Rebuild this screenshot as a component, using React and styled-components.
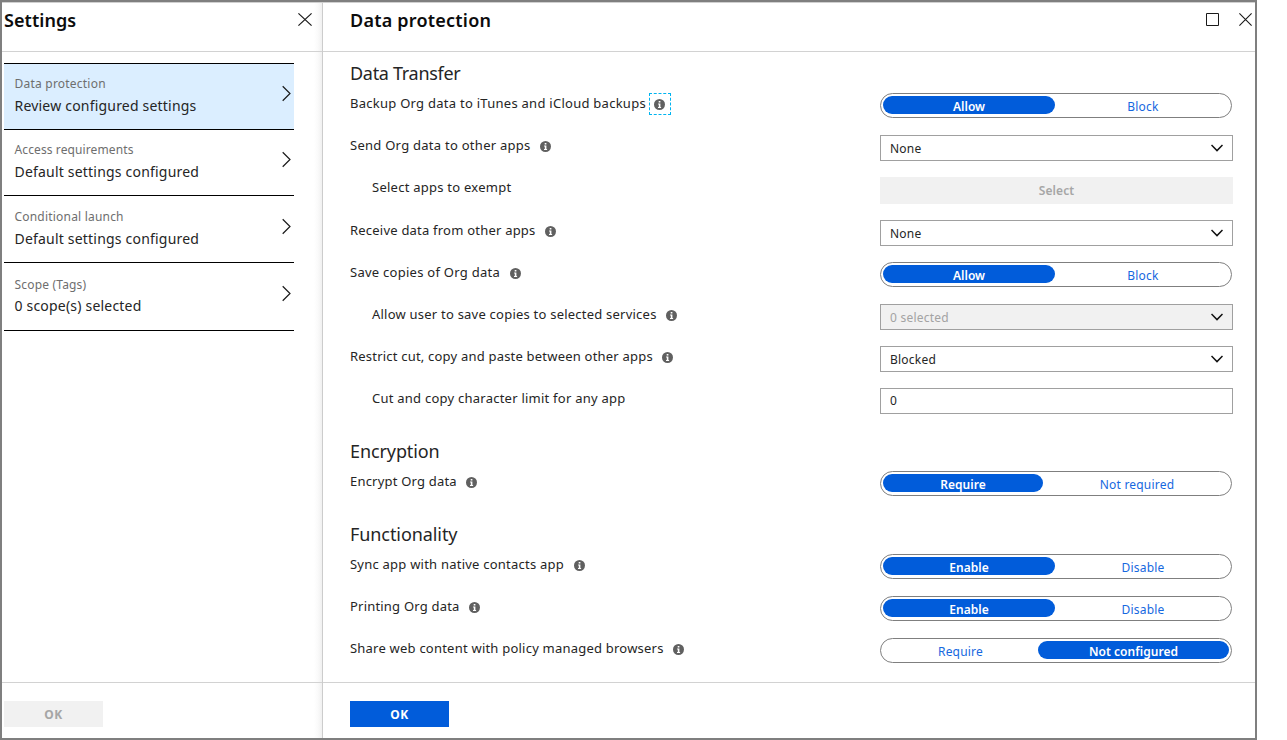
import React from "react";
import styled, { createGlobalStyle, css } from "styled-components";

const GlobalStyle = createGlobalStyle`
  *, *::before, *::after { box-sizing: border-box; }
  body { margin: 0; background: #fff; }
  button, input { font: inherit; letter-spacing: inherit; margin: 0; }
`;

const Frame = styled.div`
  display: flex;
  width: 1257px;
  height: 740px;
  border: 2px solid #7f7f7f;
  background: #fff;
  color: #252525;
  font-family: "Noto Sans", "Open Sans", sans-serif;
  font-size: 13px;
  letter-spacing: 0.225px;
`;

const Blade = styled.section`
  display: flex;
  flex-direction: column;
  border-top: 1px solid #d0d0d0;
`;

const SettingsBlade = styled(Blade)`
  width: 321px;
  border-right: 1px solid #cccccc;
  background: linear-gradient(to left, #f0f0f0 0, #fafafa 4px, #fff 8px);
`;

const DetailBlade = styled(Blade)`
  flex: 1;
`;

const BladeHeader = styled.header`
  display: flex;
  align-items: flex-start;
  height: 49px;
  padding-left: ${(p) => p.$inset}px;
  padding-right: ${(p) => p.$end}px;
  border-bottom: 1px solid #d2d2d2;
`;

const BladeTitle = styled.h1`
  flex: 1;
  margin: 5px 0 0;
  font-size: 18px;
  font-weight: 600;
  line-height: 24px;
  letter-spacing: ${(p) => p.$track}px;
  color: #0c0c0c;
`;

const WindowControls = styled.div`
  display: flex;
  gap: 20px;
  margin-top: 10px;
`;

const IconButton = styled.button`
  display: block;
  padding: 0;
  border: 0;
  background: none;
  color: #1a1a1a;
  line-height: 0;
`;

const BladeBody = styled.div`
  flex: 1;
  padding-left: ${(p) => p.$inset}px;
`;

const BladeFooter = styled.footer`
  height: 56px;
  padding: 18px 0 0 ${(p) => p.$inset}px;
  border-top: 1px solid #d2d2d2;
`;

const OkButton = styled.button`
  display: block;
  width: 99px;
  height: 26px;
  padding: 1px 0 0;
  border: 0;
  font-size: 12px;
  font-weight: 700;
  letter-spacing: 0.4px;
  color: ${(p) => (p.disabled ? "#a6a6a6" : "#fff")};
  background: ${(p) => (p.disabled ? "#f1f1f1" : "#015cda")};
`;

const NavList = styled.nav`
  width: 290px;
  margin-top: 11px;
  border-top: 1px solid #000;
`;

const NavItem = styled.a`
  display: flex;
  align-items: flex-start;
  justify-content: space-between;
  height: ${(p) => p.$height}px;
  padding: 0 3px 0 10.5px;
  border-bottom: 1px solid #000;
  background: ${(p) => (p.$active ? "#dbeeff" : "transparent")};
`;

const NavText = styled.div`
  padding-top: ${(p) => p.$top}px;
`;

const NavCaption = styled.div`
  font-size: 12px;
  line-height: 20px;
  letter-spacing: ${(p) => p.$track}px;
  color: #6e6e6e;
`;

const NavValue = styled.div`
  padding-top: ${(p) => p.$gap}px;
  font-size: 14px;
  line-height: 22px;
  letter-spacing: 0.2px;
`;

const NavChevron = styled.svg`
  display: block;
  margin-top: ${(p) => p.$top}px;
`;

const SectionTitle = styled.h2`
  height: 41px;
  margin: 0;
  padding-top: 9px;
  font-size: 18px;
  font-weight: 400;
  line-height: 24px;
  letter-spacing: ${(p) => p.$track}px;
`;

const SettingRow = styled.div`
  display: grid;
  grid-template-columns: 530px 353px;
  align-items: start;
  height: ${(p) => p.$height || 42}px;
`;

const SettingLabel = styled.div`
  display: flex;
  padding-left: ${(p) => (p.$nested ? 22 : 0)}px;
  line-height: 20px;
  white-space: nowrap;
  letter-spacing: ${(p) => p.$track ?? 0.225}px;
`;

const InfoBox = styled.span`
  display: flex;
  align-items: center;
  justify-content: center;
  width: 22px;
  height: 22px;
  margin-left: 4px;
  ${(p) =>
    p.$focused &&
    css`
      border: 1px dashed #00b4f0;
      margin-left: 3px;
    `}
`;

const Toggle = styled.div`
  display: flex;
  width: 352px;
  height: 25px;
  padding: 2px;
  border: 1px solid #7f7f7f;
  border-radius: 13px;
  font-size: 12px;
`;

const Segment = styled.button`
  flex: ${(p) => (p.$width ? `0 0 ${p.$width}px` : "1")};
  height: 18px;
  padding: 2px 0 0 ${(p) => p.$shift || 0}px;
  border: 0;
  border-radius: 9px;
  line-height: 18px;
  white-space: nowrap;
  background: none;
  color: #1668e0;
  letter-spacing: 0.2px;
  ${(p) =>
    p.$selected &&
    css`
      background: #015cda;
      color: #fff;
      font-weight: 600;
      letter-spacing: 0.04px;
    `}
`;

const Field = styled.div`
  display: flex;
  align-items: center;
  justify-content: space-between;
  height: 26px;
  padding: 1px 9px 0 9px;
  border: 1px solid #a0a0a0;
  font-size: 12px;
  color: ${(p) => (p.$disabled ? "#a3a3a3" : "#252525")};
  background: ${(p) => (p.$disabled ? "#f1f1f1" : "#fff")};
`;

const TextInput = styled.input`
  width: 100%;
  height: 26px;
  padding: 0 9px 1px;
  border: 1px solid #a0a0a0;
  border-radius: 0;
  font-size: 12px;
  color: #252525;
  background: #fff;
`;

const SelectButton = styled.button`
  height: 27px;
  padding: 0;
  border: 0;
  font-size: 12px;
  font-weight: 600;
  letter-spacing: 0.09px;
  color: #a6a6a6;
  background: #f1f1f1;
`;

const CloseIcon = ({ width = 13 }) => (
  <svg width={width} height="13" viewBox="0 0 13 13" preserveAspectRatio="none" fill="none" stroke="currentColor" strokeWidth="1.1">
    <path d="M0.4 0.4 12.6 12.6M12.6 0.4 0.4 12.6" />
  </svg>
);

const MaximizeIcon = () => (
  <svg width="13" height="13" viewBox="0 0 13 13" fill="none" stroke="currentColor">
    <path d="M0.5 0.5h12v12h-12z" />
  </svg>
);

const Info = ({ focused }) => (
  <InfoBox $focused={focused}>
    <svg width="11" height="11" viewBox="0 0 11 11">
      <circle cx="5.5" cy="5.5" r="5.5" fill="#606060" />
      <path d="M4.7 2h1.7v1.5H4.7zM4.1 4.5h2.3v3.6h.7v.9H4v-.9h.8V5.4h-.7z" fill="#fff" />
    </svg>
  </InfoBox>
);

const Caret = styled.svg`
  display: block;
  margin-bottom: 1px;
`;

const CaretDown = () => (
  <Caret width="12" height="8" viewBox="0 0 12 8" fill="none" stroke="#111" strokeWidth="1.5">
    <path d="M0.5 1 6 6.6 11.5 1" />
  </Caret>
);

const Dropdown = ({ value, disabled }) => (
  <Field $disabled={disabled}>
    <span>{value}</span>
    <CaretDown />
  </Field>
);

const Switch = ({ options, selected, width }) => (
  <Toggle>
    {options.map((option, i) => (
      <Segment
        key={option}
        $selected={i === selected}
        $width={i === 0 ? width : undefined}
        $shift={i === 1 && selected === 0 ? 2 : 0}
      >
        {option}
      </Segment>
    ))}
  </Toggle>
);

const Setting = ({ label, nested, info, focused, height, track, children }) => (
  <SettingRow $height={height}>
    <SettingLabel $nested={nested} $track={track}>
      <span>{label}</span>
      {info && <Info focused={focused} />}
    </SettingLabel>
    {children}
  </SettingRow>
);

const navItems = [
  { caption: "Data protection", value: "Review configured settings", height: 66, top: 10, gap: 1, track: 0.22, chevron: 21, active: true },
  { caption: "Access requirements", value: "Default settings configured", height: 66, top: 10, gap: 1, track: 0.11, chevron: 21 },
  { caption: "Conditional launch", value: "Default settings configured", height: 67, top: 11, gap: 1, track: 0.2, chevron: 22 },
  { caption: "Scope (Tags)", value: "0 scope(s) selected", height: 68, top: 12, gap: 0, track: 0.18, chevron: 22 },
];

export default function App() {
  return (
    <>
      <GlobalStyle />
      <Frame>
        <SettingsBlade>
          <BladeHeader $inset={2} $end={10}>
            <BladeTitle $track={0.06}>Settings</BladeTitle>
            <WindowControls>
              <IconButton aria-label="Close settings"><CloseIcon width={14} /></IconButton>
            </WindowControls>
          </BladeHeader>
          <BladeBody $inset={2}>
            <NavList>
              {navItems.map((item) => (
                <NavItem key={item.caption} $height={item.height} $active={item.active}>
                  <NavText $top={item.top}>
                    <NavCaption $track={item.track}>{item.caption}</NavCaption>
                    <NavValue $gap={item.gap}>{item.value}</NavValue>
                  </NavText>
                  <NavChevron $top={item.chevron} width="9" height="17" viewBox="0 0 9 17" fill="none" stroke="#1a1a1a" strokeWidth="1.2">
                    <path d="M0.7 1.3 8 8.5 0.7 15.7" />
                  </NavChevron>
                </NavItem>
              ))}
            </NavList>
          </BladeBody>
          <BladeFooter $inset={2}>
            <OkButton disabled>OK</OkButton>
          </BladeFooter>
        </SettingsBlade>

        <DetailBlade>
          <BladeHeader $inset={27} $end={3}>
            <BladeTitle $track={0.22}>Data protection</BladeTitle>
            <WindowControls>
              <IconButton aria-label="Maximize"><MaximizeIcon /></IconButton>
              <IconButton aria-label="Close"><CloseIcon /></IconButton>
            </WindowControls>
          </BladeHeader>
          <BladeBody $inset={27}>
            <SectionTitle $track={-0.3}>Data Transfer</SectionTitle>
            <Setting label="Backup Org data to iTunes and iCloud backups" info focused track={0.265}>
              <Switch options={["Allow", "Block"]} selected={0} width={172} />
            </Setting>
            <Setting label="Send Org data to other apps" info track={0.265}>
              <Dropdown value="None" />
            </Setting>
            <Setting label="Select apps to exempt" nested height={43} track={0.25}>
              <SelectButton>Select</SelectButton>
            </Setting>
            <Setting label="Receive data from other apps" info track={0.215}>
              <Dropdown value="None" />
            </Setting>
            <Setting label="Save copies of Org data" info track={0.265}>
              <Switch options={["Allow", "Block"]} selected={0} width={172} />
            </Setting>
            <Setting label="Allow user to save copies to selected services" nested info track={0.225}>
              <Dropdown value="0 selected" disabled />
            </Setting>
            <Setting label="Restrict cut, copy and paste between other apps" info track={0.205}>
              <Dropdown value="Blocked" />
            </Setting>
            <Setting label="Cut and copy character limit for any app" nested track={0.24}>
              <TextInput defaultValue="0" />
            </Setting>

            <SectionTitle $track={-0.1}>Encryption</SectionTitle>
            <Setting label="Encrypt Org data" info track={0.2}>
              <Switch options={["Require", "Not required"]} selected={0} width={160} />
            </Setting>

            <SectionTitle $track={-0.08}>Functionality</SectionTitle>
            <Setting label="Sync app with native contacts app" info track={0.23}>
              <Switch options={["Enable", "Disable"]} selected={0} width={172} />
            </Setting>
            <Setting label="Printing Org data" info track={0.2}>
              <Switch options={["Enable", "Disable"]} selected={0} width={172} />
            </Setting>
            <Setting label="Share web content with policy managed browsers" info track={0.22}>
              <Switch options={["Require", "Not configured"]} selected={1} width={155} />
            </Setting>
          </BladeBody>
          <BladeFooter $inset={27}>
            <OkButton>OK</OkButton>
          </BladeFooter>
        </DetailBlade>
      </Frame>
    </>
  );
}
